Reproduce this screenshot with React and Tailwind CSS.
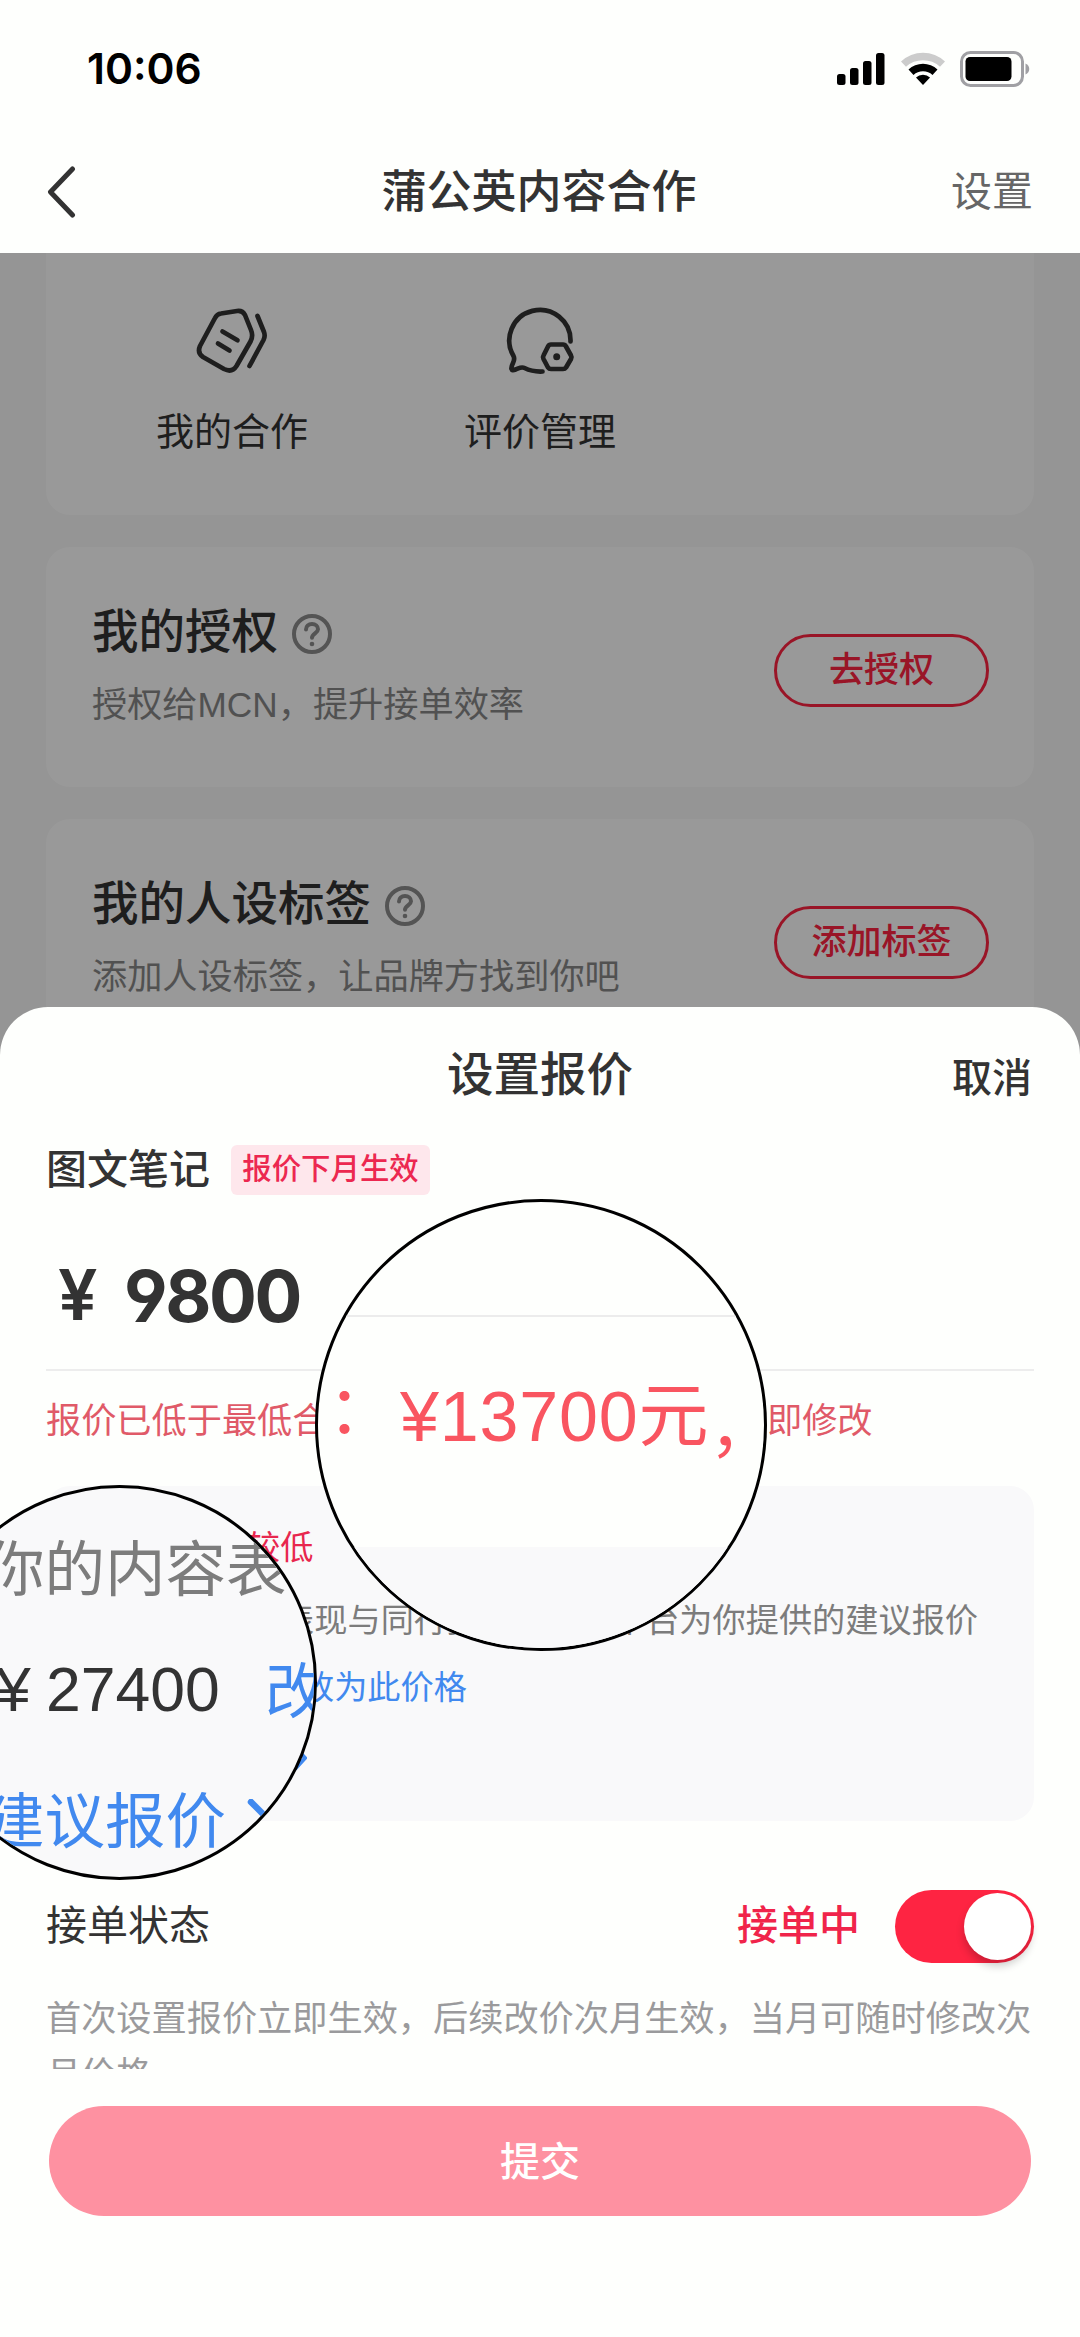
import React, { useState } from 'react';

const HelpIcon = () => (
  <svg width="40" height="40" viewBox="0 0 40 40" fill="none" stroke="#8c8c8c" strokeWidth="4" strokeLinecap="round">
    <circle cx="20" cy="20" r="18" />
    <path d="M14 15.500c0-3.400 2.600-5.500 6-5.500s6 2.100 6 5.200c0 3.800-6 4.600-6 8.600" />
    <circle cx="20" cy="30" r="2.300" fill="#8c8c8c" stroke="none" />
  </svg>
);

const CooperationIcon = () => (
  <svg width="72" height="68" viewBox="0 0 72 68" fill="none" stroke="#333" strokeWidth="4.700" strokeLinecap="round" strokeLinejoin="round">
    <path d="M25 6.500L41 4q5.500-.8 8 4l6 15q2.500 6-.5 11.500L40.500 59q-4.500 7-12.500 3L7 50q-6-4-3-11L19 11q2-4 6-4.500z" />
    <path d="M26.500 24.500l15 8.700M22 36.500l11.500 7" />
    <path d="M61.500 9l6.500 16q1.500 4-.5 8L53.500 59" />
  </svg>
);

const ReviewIcon = () => (
  <svg width="68" height="68" viewBox="-1 0 68 68" overflow="visible" fill="none" stroke="#333" strokeWidth="4.700" strokeLinecap="round" strokeLinejoin="round">
    <path d="M63.500 34.500A30.600 30.600 0 1 0 6.500 49q1.500 3-.5 7t-1.500 6q.5 2 4 .5c4-1.500 6-3 9-1.500q8 4 18 3.500" />
    <path d="M44 37.500h12q2 0 3 2l5 9q1 1.500 0 3.500l-5 8.500q-1 1.500-3 1.500H44q-2 0-3-1.500l-4.500-8.500q-1-2 0-3.500l4.500-9q1-2 3-2z" />
    <circle cx="49.700" cy="49.700" r="3.500" fill="#333" stroke="none" />
  </svg>
);

const StatusBar = () => (
  <div className="flex h-[136px] items-center justify-between pl-[87px] pr-[50px] pt-[2px]">
    <div className="font-[Inter] text-[42.500px] font-semibold text-black">10:06</div>
    <div className="flex items-center">
      <svg width="48" height="34" viewBox="0 0 48 34" className="mr-[15px]">
        <rect x="0" y="22" width="8.500" height="11" rx="2.500" />
        <rect x="13" y="16" width="8.500" height="17" rx="2.500" />
        <rect x="26" y="9" width="8.500" height="24" rx="2.500" />
        <rect x="39" y="1" width="8.500" height="32" rx="2.500" />
      </svg>
      <svg width="46" height="34" viewBox="0 0 46 34" className="mr-[14px]">
        <path d="M1 9.500a32 32 0 0 1 44 0l-5 5.300a25 25 0 0 0-34 0z" fill="#ccc" />
        <path d="M8.500 17.500a21 21 0 0 1 29 0l-5 5.500a14 14 0 0 0-19 0z" />
        <path d="M16 25.500a10 10 0 0 1 14 0l-7 7.500z" />
      </svg>
      <svg width="70" height="36" viewBox="0 0 70 36">
        <rect x="1.500" y="1.500" width="61" height="33" rx="9" fill="none" stroke="#a0a0a4" strokeWidth="3" />
        <rect x="5.500" y="6" width="46" height="24" rx="4.500" />
        <path d="M65.500 12.500c5 2 5 9 0 11z" fill="#a0a0a4" />
      </svg>
    </div>
  </div>
);

const NavBar = () => (
  <div className="flex h-[117px] items-center justify-between pb-[3px] pl-[46px] pr-[47px]">
    <button className="flex w-[81px] pb-[2px]">
      <svg width="30" height="52" viewBox="0 0 30 52" fill="none" stroke="#333" strokeWidth="5" strokeLinecap="round" strokeLinejoin="round">
        <path d="M26.500 3L4.500 26l22 23" />
      </svg>
    </button>
    <h1 className="text-[45px] font-medium text-[#333]">蒲公英内容合作</h1>
    <button className="text-[41px] text-[#666]">设置</button>
  </div>
);

const Shortcut = ({ icon, label }) => (
  <div className="flex w-[308px] flex-col items-center">
    {icon}
    <div className="mt-[37px] text-[38px] leading-[40px] text-[#333]">{label}</div>
  </div>
);

const SettingCard = ({ title, desc, action }) => (
  <div className="flex h-[240px] items-start justify-between rounded-[24px] bg-white pl-[46px] pr-[45px]">
    <div className="pt-[58px]">
      <div className="flex items-center text-[46.500px] font-medium leading-[54px] text-[#333]">
        <span className="mr-[14px]">{title}</span>
        <span className="pt-[3px]">
          <HelpIcon />
        </span>
      </div>
      <div className="mt-[26px] text-[35.200px] leading-[40px] text-[#888]">{desc}</div>
    </div>
    <button className="mt-[87px] flex h-[73px] w-[215px] items-center justify-center rounded-full border-3 border-[#ff2442] text-[35px] font-medium text-[#ff2442]">
      {action}
    </button>
  </div>
);

// Enlarged views that sit over the sheet
const PriceLens = () => (
  <div className="absolute left-[315px] top-[1199px] h-[452px] w-[452px] overflow-hidden rounded-full border-3 border-black bg-[#fefffd]">
    <div className="h-[115px] border-b-2 border-[#ececec]" />
    <div className="flex h-[230px] items-center whitespace-nowrap pb-[30px] pl-[10px] text-[#f95560]">
      <span className="w-[72px] shrink-0 pb-[14px] text-[66px]">：</span>
      <span className="shrink-0 text-[70px] tracking-[0.8px]">¥13700元</span>
      <span className="shrink-0 pt-[22px] text-[66px]">，</span>
    </div>
    <div className="h-[110px] bg-[#f9f9fa]" />
  </div>
);

const SuggestLens = () => (
  <div className="absolute left-[-78px] top-[1485px] h-[395px] w-[395px] overflow-hidden rounded-full border-3 border-black bg-[#f9f9fa] pl-[59px] text-[60.500px] leading-[70px]">
    <div className="mt-[47px] whitespace-nowrap text-[#7c7c7c]">你的内容表</div>
    <div className="mt-[49px] flex whitespace-nowrap">
      <span className="w-[62px] shrink-0 pl-[12px] text-[62.500px] text-[#333]">¥</span>
      <span className="w-[219px] shrink-0 text-[62.500px] text-[#333]">27400</span>
      <span className="shrink-0 pt-[3px] text-[#4189ef]">改</span>
    </div>
    <div className="mt-[60px] flex items-center whitespace-nowrap text-[#4189ef]">
      建议报价
      <svg width="28" height="46" viewBox="0 0 28 46" className="ml-[21px]" fill="none" stroke="#4189ef" strokeWidth="6.500" strokeLinecap="round">
        <path d="M4 3l20 20L4 43" />
      </svg>
    </div>
  </div>
);

const PriceSheet = () => {
  const [accepting, setAccepting] = useState(true);

  return (
    <div className="absolute inset-x-0 bottom-0 flex h-[1330px] flex-col rounded-t-[48px] bg-[#fefffd]">
      {/* Title */}
      <div className="flex h-[134px] items-center justify-between px-[48px] pt-[3px]">
        <div className="w-[80px]" />
        <h2 className="text-[46.500px] font-medium text-[#333]">设置报价</h2>
        <button className="pt-[4px] text-[40px] font-medium text-[#333]">取消</button>
      </div>

      <div className="h-[928px] overflow-hidden px-[46px]">
        {/* Price */}
        <div className="mt-[4px] flex h-[50px] items-center">
          <span className="pt-[2px] text-[41px] font-medium text-[#333]">图文笔记</span>
          <span className="ml-[21px] flex h-[50px] w-[199px] items-center justify-center rounded-[6px] bg-[#fee7ec] pb-[1px] text-[29.400px] font-medium text-[#ec2850]">
            报价下月生效
          </span>
        </div>
        <div className="flex h-[176px] items-center border-b-2 border-[#ededed] pl-[12px] pt-[28px] font-[Inter] text-[#333]">
          <span className="w-[66px] pb-[3px] text-[70px] font-semibold tracking-tight">¥</span>
          <span className="text-[71px] font-bold tracking-[-2.4px] [font-feature-settings:'ss01','cv04']">9800</span>
        </div>
        <div className="flex h-[115px] items-center justify-start pb-[14px] text-[35.200px] text-[#e05a68]">
          <span className="w-[721px]">报价已低于最低合</span>
          <span>即修改</span>
        </div>

        {/* Suggested price */}
        <div className="h-[335px] rounded-[24px] bg-[#f9f9fa] px-[36px] pt-[42px] text-[33.200px] leading-[40px]">
          <div className="pl-[165px] text-[#e8274e]">较低</div>
          <div className="mt-[33px] whitespace-nowrap text-[#7c7c7c]">根据你的内容表现与同行报价对比，平台为你提供的建议报价</div>
          <div className="mt-[27px] pl-[219px] text-[#4189ef]">改为此价格</div>
          <svg width="14" height="26" viewBox="0 0 14 26" className="ml-[211px] mt-[37px]" fill="none" stroke="#4189ef" strokeWidth="4">
            <path d="M2 2l10 11L2 24" />
          </svg>
        </div>

        {/* Order status */}
        <div className="mt-[69px] flex h-[73px] items-center text-[41px]">
          <span className="flex-1 pt-[1px] text-[#333]">接单状态</span>
          <span className="mr-[35px] pt-[1px] font-medium text-[#f0244a]">接单中</span>
          <button
            onClick={() => setAccepting(!accepting)}
            className={`flex h-[73px] w-[139px] items-center rounded-full px-[3px] ${accepting ? 'justify-end bg-[#fe2442]' : 'justify-start bg-gray-300'}`}
          >
            <span className="h-[67px] w-[67px] rounded-full bg-white shadow-[0_6px_8px_rgba(0,0,0,0.2)]" />
          </button>
        </div>
        <p className="mt-[28px] text-[35.200px] leading-[56px] text-[#9a9a9c]">
          首次设置报价立即生效，后续改价次月生效，当月可随时修改次月价格
        </p>
      </div>

      {/* Submit */}
      <button className="mx-[49px] mt-[37px] h-[110px] rounded-full bg-[#fe91a1] pt-[1px] text-[40px] font-medium text-white">提交</button>
    </div>
  );
};

const App = () => {
  return (
    <div className="relative flex h-[2337px] w-[1080px] flex-col overflow-hidden bg-[#fefffd] font-['Liberation_Sans','Noto_Sans_CJK_SC',sans-serif]">
      <StatusBar />
      <NavBar />

      <div className="relative flex-1 overflow-hidden bg-[#f8f8f8] px-[46px]">
        <div className="flex h-[262px] rounded-b-[24px] bg-white pl-[32px] pt-[54px]">
          <Shortcut icon={<CooperationIcon />} label="我的合作" />
          <Shortcut icon={<ReviewIcon />} label="评价管理" />
        </div>
        <div className="mt-[32px] flex flex-col gap-[32px]">
          <SettingCard title="我的授权" desc="授权给MCN，提升接单效率" action="去授权" />
          <SettingCard title="我的人设标签" desc="添加人设标签，让品牌方找到你吧" action="添加标签" />
        </div>
        <div className="absolute inset-0 bg-black/40" />
      </div>

      <PriceSheet />
      <PriceLens />
      <SuggestLens />
    </div>
  );
};

export default App;
